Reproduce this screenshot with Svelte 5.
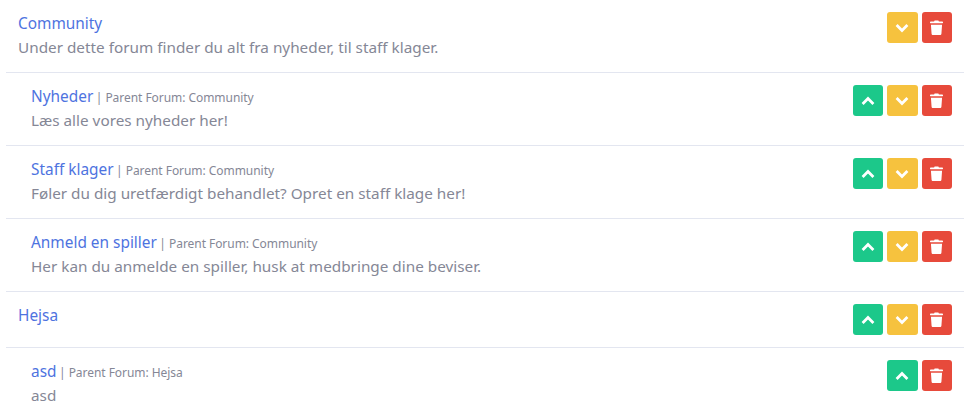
<script>
  const forums = [
    { name: 'Community', desc: 'Under dette forum finder du alt fra nyheder, til staff klager.', up: false, down: true },
    { name: 'Nyheder', parent: 'Community', desc: 'Læs alle vores nyheder her!', up: true, down: true },
    { name: 'Staff klager', parent: 'Community', desc: 'Føler du dig uretfærdigt behandlet? Opret en staff klage her!', up: true, down: true },
    { name: 'Anmeld en spiller', parent: 'Community', desc: 'Her kan du anmelde en spiller, husk at medbringe dine beviser.', up: true, down: true },
    { name: 'Hejsa', desc: '', up: true, down: true },
    { name: 'asd', parent: 'Hejsa', desc: 'asd', up: true, down: false }
  ];
</script>

<main class="list">
  {#each forums as forum}
    <div class="item" class:child={forum.parent}>
      <div class="text">
        <div class="title">
          <a href="#top">{forum.name}</a>
          {#if forum.parent}
            <small>| Parent Forum: {forum.parent}</small>
          {/if}
        </div>
        {#if forum.desc}
          <div class="desc">{forum.desc}</div>
        {/if}
      </div>
      <div class="actions">
        {#if forum.up}
          <button class="btn green" aria-label="Up">
            <svg viewBox="0 0 14 10" width="14" height="10"><path d="M1.6 8 7 2.6 12.4 8" /></svg>
          </button>
        {/if}
        {#if forum.down}
          <button class="btn yellow" aria-label="Down">
            <svg viewBox="0 0 14 10" width="14" height="10"><path d="M1.6 2 7 7.4 12.4 2" /></svg>
          </button>
        {/if}
        <button class="btn red" aria-label="Delete">
          <svg class="trash" viewBox="0 0 14 16" width="13" height="15">
            <path d="M5 0.4h4l.6 1.1h3.6c.5 0 .8.4.8.8v.6c0 .3-.2.5-.5.5H.5c-.3 0-.5-.2-.5-.5v-.6c0-.4.3-.8.8-.8h3.6z" />
            <path d="M1 5h12l-.7 9.6c0 .8-.7 1.4-1.5 1.4H3.2c-.8 0-1.5-.6-1.5-1.4z" />
          </svg>
        </button>
      </div>
    </div>
  {/each}
</main>

<style>
  :global(body) {
    margin: 0;
    background: #fff;
    font-family: "Noto Sans", "Open Sans", sans-serif;
    overflow: hidden;
  }
  .list {
    margin-left: 6px;
  }
  .item {
    display: flex;
    justify-content: space-between;
    align-items: flex-start;
    padding: 12px 12px 12px 12px;
    border-bottom: 1px solid #e3e6f0;
  }
  .item.child {
    padding-left: 25px;
  }
  .title {
    height: 24px;
    font-size: 15.4px;
    line-height: 23px;
    color: #858796;
  }
  .title a {
    color: #4e73df;
    text-decoration: none;
  }
  small {
    margin-left: -1.5px;
    font-size: 12px;
    line-height: 1;
    letter-spacing: -0.05px;
  }
  .desc {
    font-size: 15.3px;
    line-height: 23px;
    height: 24px;
    color: #858796;
  }
  .actions {
    display: flex;
    gap: 4px;
  }
  .btn {
    width: 30.4px;
    height: 31px;
    padding: 0;
    border: none;
    border-radius: 3px;
    display: flex;
    align-items: center;
    justify-content: center;
  }
  .btn svg path {
    fill: none;
    stroke: #fff;
    stroke-width: 2.8;
  }
  .btn .trash path {
    fill: #fff;
    stroke: none;
  }
  .green { background: #1cc88a; }
  .yellow { background: #f6c23e; }
  .red { background: #e74a3b; }
</style>
